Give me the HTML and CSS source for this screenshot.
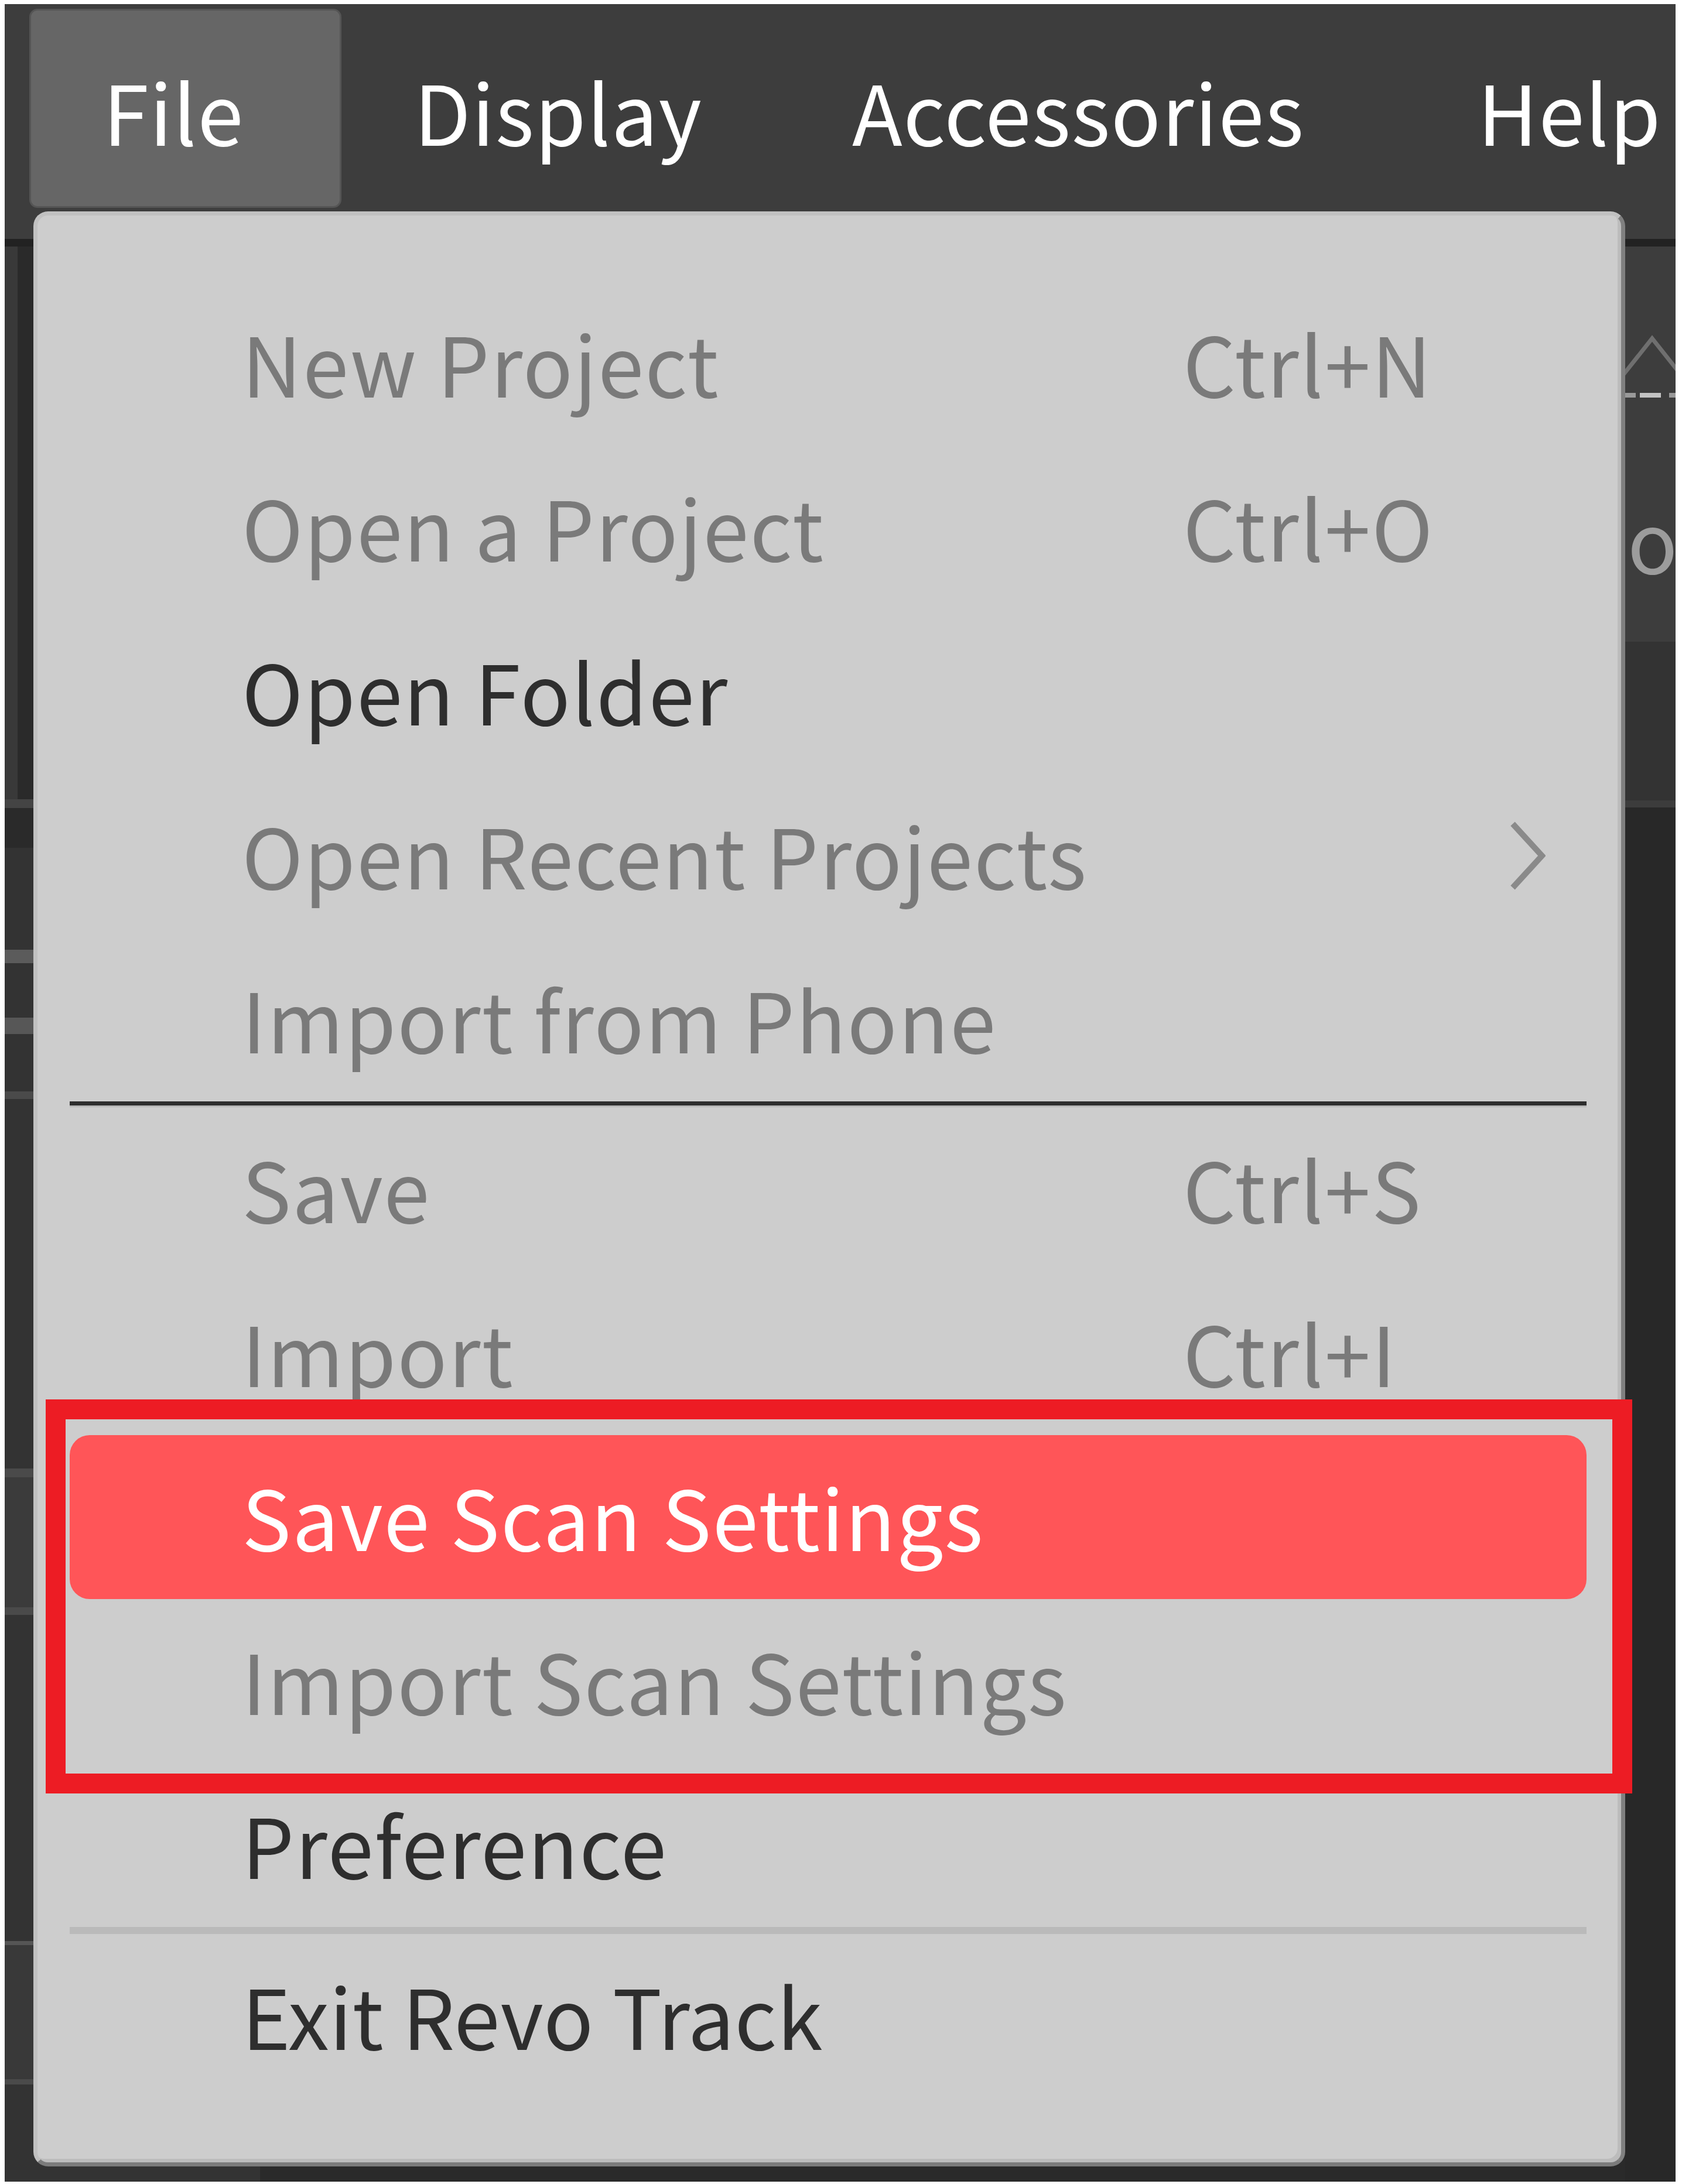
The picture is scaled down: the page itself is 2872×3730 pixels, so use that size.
FILE: index.html
```html
<!DOCTYPE html>
<html lang="en">
<head>
<meta charset="utf-8">
<title>File menu</title>
<link rel="stylesheet" href="styles.css">
</head>
<body>
<div class="app">
  <div class="menubar">
    <div class="bar-item active">File</div>
    <div class="bar-item display">Display</div>
    <div class="bar-item acc">Accessories</div>
    <div class="bar-item help">Help</div>
  </div>
  <div class="bar-line"></div>
  <div class="workspace">
    <div class="left-strip">
      <div class="blk b-top"></div>
      <div class="blk l1"></div>
      <div class="blk b2"></div>
      <div class="blk b3"></div>
      <div class="blk l2"></div>
      <div class="blk b4"></div>
      <div class="blk l3"></div>
      <div class="blk b5"></div>
      <div class="blk l4"></div>
      <div class="blk b6"></div>
      <div class="blk l5"></div>
      <div class="blk b7"></div>
      <div class="blk l6"></div>
      <div class="blk b8"></div>
      <div class="blk l7"></div>
      <div class="blk b9"></div>
      <div class="blk l8"></div>
      <div class="blk b10"></div>
    </div>
    <div class="center"><div class="center-a"></div></div>
    <div class="right-strip">
      <div class="r-top">
        <svg class="r-icons" width="86" height="300" viewBox="0 0 86 300">
          <polyline points="-4,220 46,157 96,220" fill="none" stroke="#6f6f6f" stroke-width="7"/>
          <line x1="-3" y1="254" x2="18" y2="254" stroke="#9a9a9a" stroke-width="8"/>
          <line x1="25" y1="254" x2="61" y2="254" stroke="#c4c4c4" stroke-width="8"/>
          <line x1="75" y1="254" x2="96" y2="254" stroke="#9a9a9a" stroke-width="8"/>
        </svg>
        <div class="r-text">o</div>
      </div>
      <div class="r-b2"></div>
      <div class="r-l1"></div>
      <div class="r-b3"></div>
    </div>
  </div>

  <div class="menu">
    <div class="item"><span class="label">New Project</span><span class="shortcut">Ctrl+N</span></div>
    <div class="item"><span class="label">Open a Project</span><span class="shortcut">Ctrl+O</span></div>
    <div class="item enabled"><span class="label">Open Folder</span></div>
    <div class="item"><span class="label">Open Recent Projects</span>
      <svg class="chev" width="60" height="117" viewBox="0 0 60 117"><polyline points="4,4 54,58.5 4,113" fill="none" stroke="#8a8a8a" stroke-width="10"/></svg>
    </div>
    <div class="item"><span class="label">Import from Phone</span></div>
    <div class="sep-dark"></div>
    <div class="item"><span class="label">Save</span><span class="shortcut">Ctrl+S</span></div>
    <div class="item"><span class="label">Import</span><span class="shortcut">Ctrl+I</span></div>
    <div class="item hl"><span class="label">Save Scan Settings</span></div>
    <div class="item"><span class="label">Import Scan Settings</span></div>
    <div class="item enabled"><span class="label">Preference</span></div>
    <div class="sep-light"></div>
    <div class="item enabled tight"><span class="label">Exit Revo Track</span></div>
  </div>

  <div class="callout"></div>
</div>
</body>
</html>
```

FILE: styles.css
```css
html, body {
  padding: 0;
}
body {
  margin: 7px 11px 4px 8px;
  background: #ffffff;
  font-family: "Noto Sans CJK SC", "Noto Sans", sans-serif;
}
.app {
  position: relative;
  width: 2853px;
  height: 3719px;
  overflow: hidden;
  background: #2a2a2a;
  display: flex;
  flex-direction: column;
}

/* menu bar */
.menubar {
  flex: none;
  height: 401px;
  box-sizing: border-box;
  padding: 8px 0 0 42px;
  background: #3d3d3d;
  display: flex;
  align-items: flex-start;
}
.bar-item {
  flex: none;
  height: 340px;
  box-sizing: border-box;
  padding-top: 9px;
  line-height: 328px;
  font-size: 141px;
  letter-spacing: 1.5px;
  color: #ffffff;
  white-space: nowrap;
}
.bar-item.active {
  width: 533px;
  border: 3px solid #555555;
  border-radius: 14px;
  background: #666666;
  padding-top: 6px;
  padding-left: 123px;
}
.bar-item.display {
  width: 735px;
  padding-left: 124px;
}
.bar-item.acc {
  width: 1079px;
  padding-left: 137px;
}
.bar-item.help {
  padding-left: 126px;
}
.bar-line {
  flex: none;
  height: 13px;
  background: #222222;
}

/* background workspace */
.workspace {
  flex: 1;
  display: flex;
  min-height: 0;
}
.left-strip {
  flex: none;
  width: 49px;
  display: flex;
  flex-direction: column;
}
.blk { flex: none; }
.b-top { height: 944px; background: linear-gradient(to right, #393939 22px, #2a2a2a 22px); }
.l1 { height: 15px; background: #444444; }
.b2 { height: 68px; background: #2a2a2a; }
.b3 { height: 174px; background: #333333; }
.l2 { height: 23px; background: #5b5b5b; }
.b4 { height: 93px; background: #333333; }
.l3 { height: 28px; background: #575757; }
.b5 { height: 98px; background: #333333; }
.l4 { height: 13px; background: #4a4a4a; }
.b6 { height: 631px; background: #333333; }
.l5 { height: 15px; background: #4a4a4a; }
.b7 { height: 222px; background: #3b3b3b; }
.l6 { height: 13px; background: #4a4a4a; }
.b8 { height: 557px; background: #333333; }
.l7 { height: 7px; background: #555555; }
.b9 { height: 229px; background: #393939; }
.l8 { height: 9px; background: #4a4a4a; }
.b10 { flex: 1; background: #333333; }

.center {
  flex: 1;
  display: flex;
  background: #2a2a2a;
}
.center-a {
  width: 387px;
  background: #333333;
}

.right-strip {
  flex: none;
  width: 86px;
  display: flex;
  flex-direction: column;
  overflow: hidden;
}
.r-top {
  flex: none;
  height: 675px;
  background: #3d3d3d;
  overflow: hidden;
}
.r-icons {
  display: block;
  overflow: visible;
}
.r-text {
  margin-top: 96px;
  padding-left: 4px;
  font-size: 141px;
  line-height: 204px;
  color: #9c9c9c;
  white-space: nowrap;
}
.r-b2 { flex: none; height: 271px; background: #333333; }
.r-l1 { flex: none; height: 12px; background: #3c3c3c; }
.r-b3 { flex: 1; background: #282828; }

/* dropdown menu */
.menu {
  position: absolute;
  left: 49px;
  top: 354px;
  width: 2718px;
  box-sizing: border-box;
  border: 7px solid #c1c1c1;
  border-right-color: #808080;
  border-bottom-color: #7b7b7b;
  border-radius: 25px;
  background: #cdcdcd;
  box-shadow: inset -6px -6px 0 #bcbcbc;
  padding: 113px 59px 110px 55px;
  z-index: 2;
}
.item {
  height: 280px;
  display: flex;
  align-items: flex-start;
  font-size: 141px;
  line-height: 273px;
  letter-spacing: 2px;
  color: #7a7a7a;
  white-space: nowrap;
}
.item.tight {
  letter-spacing: 0.4px;
}
.item .label {
  flex: 0 0 1901px;
  box-sizing: border-box;
  padding-left: 294px;
}
.item.enabled {
  color: #2e2e2e;
}
.item.hl {
  background: #ff5558;
  border-radius: 34px;
  color: #ffffff;
}
.chev {
  display: block;
  align-self: center;
  margin-left: auto;
  margin-right: 70px;
}
.sep-dark {
  height: 7px;
  background: #2e2e2e;
  border-bottom: 3px solid #b8b8b8;
}
.sep-light {
  height: 12px;
  background: #bababa;
}

/* annotation box */
.callout {
  position: absolute;
  left: 70px;
  top: 2383px;
  width: 2709px;
  height: 673px;
  box-sizing: border-box;
  border: 34px solid #ed1c24;
  z-index: 3;
}
```
